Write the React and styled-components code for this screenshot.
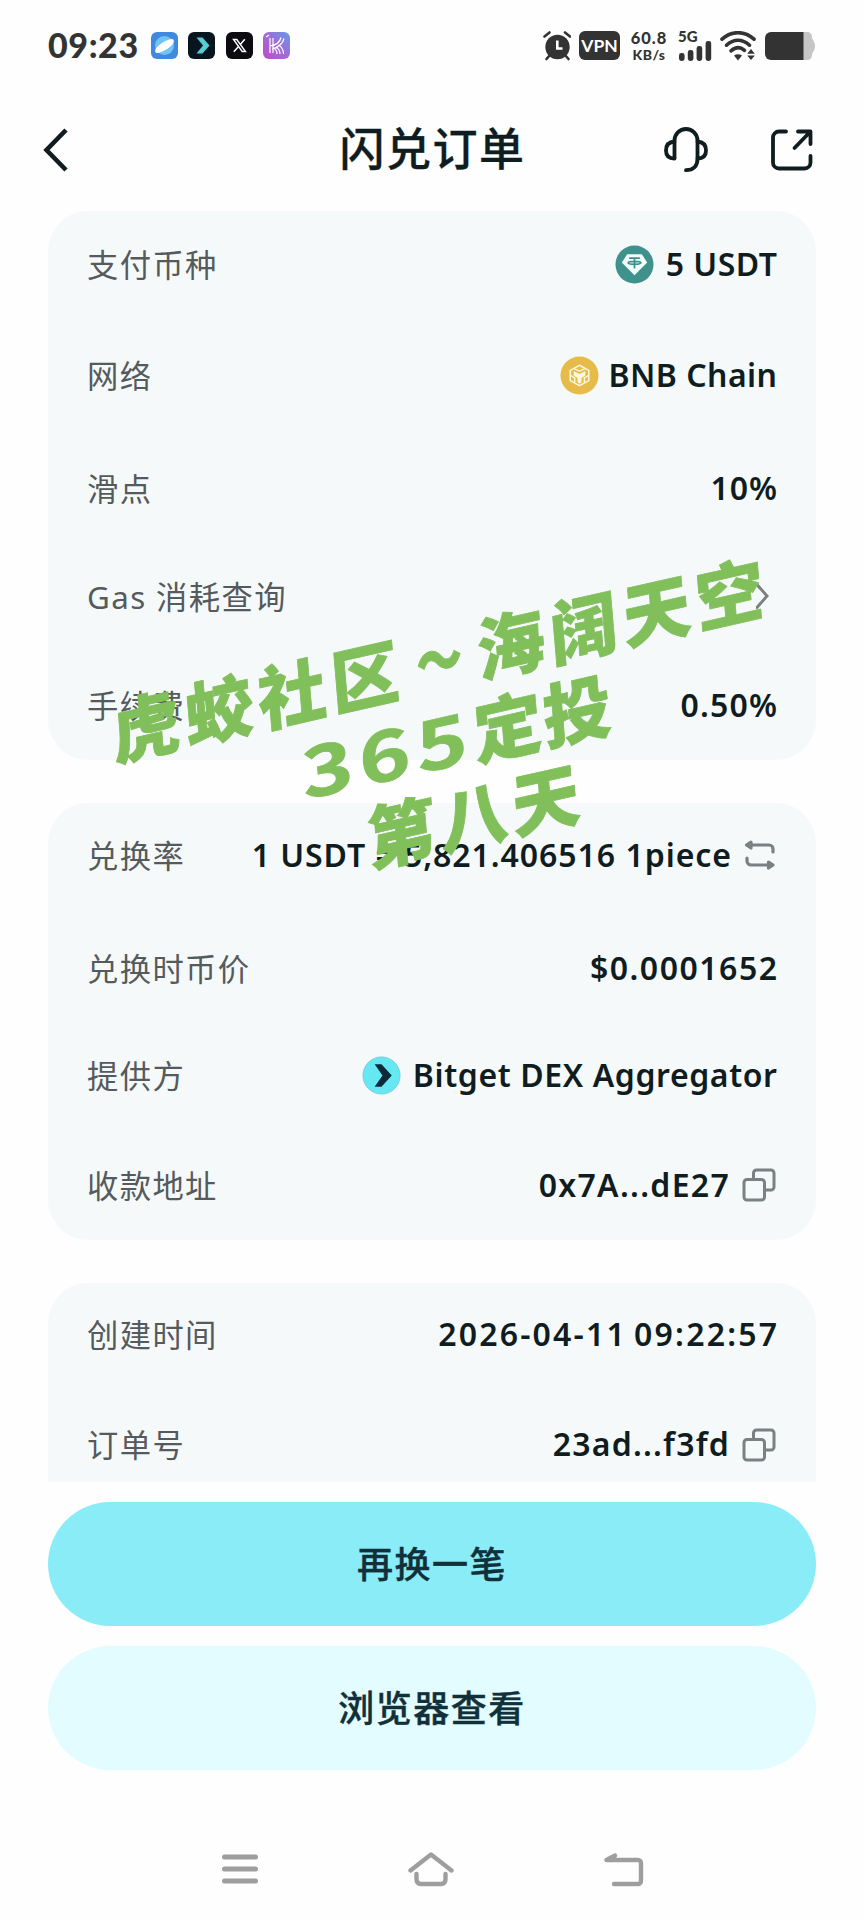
import React from 'react'
import styled, { createGlobalStyle } from 'styled-components';

const GlobalStyle = createGlobalStyle`
    * {
        box-sizing: border-box;
    }
    body {
        margin: 0;
        background-color: #fefefe;
        font-family: "Noto Sans", "Noto Sans CJK SC", sans-serif;
    }
`;

const AlarmIcon = () => (
    <svg width="28" height="30" viewBox="0 0 28 30">
        <circle cx="14.5" cy="16" r="12.2" fill="#333" />
        <path d="M1.5 5.5L6.5 1.5M27 5.5L22 1.5M3.5 28L7 24M25.5 28L22 24" stroke="#333" strokeWidth="2.6" strokeLinecap="round" />
        <path d="M14.3 9.5V17.5H19.5" stroke="#fff" strokeWidth="2.6" fill="none" />
    </svg>
);

const SignalIcon = () => (
    <svg width="34" height="20" viewBox="0 0 34 20" fill="#333">
        <rect x="1" y="12" width="5.6" height="8" rx="2.4" />
        <rect x="9.8" y="9" width="5.6" height="11" rx="2.4" />
        <rect x="18.6" y="5" width="5.6" height="15" rx="2.4" />
        <rect x="27.6" y="0" width="5.6" height="20" rx="2.4" />
    </svg>
);

const WifiIcon = () => (
    <svg width="36" height="30" viewBox="0 0 36 30">
        <g fill="none" stroke="#333" strokeWidth="3.6" strokeLinecap="round">
            <path d="M2 8.2C11.5 -0.5 24.5 -0.5 34 8.2" />
            <path d="M6.5 14.2C13.5 7.5 22.5 7.5 29.5 14.2" />
            <path d="M11 19.8C15.5 15.8 20.5 15.8 24.5 19.4" />
        </g>
        <path d="M14 24.5Q18 22 22 24.5L18 29.5Z" fill="#333" />
        <path d="M31 18L34.8 22.8H27.2ZM31 29L34.8 24.5H27.2Z" fill="#333" />
    </svg>
);

const BatteryIcon = () => (
    <svg width="52" height="30" viewBox="0 0 52 30">
        <path d="M36 1H43C46 1 48 3 48 6C48 9 51 10 51 15C51 20 48 21 48 24C48 27 46 29 43 29H36Z" fill="#c6c6c6" />
        <path d="M7 1H39.5V29H7A6 6 0 0 1 1 23V7A6 6 0 0 1 7 1Z" fill="#333" />
    </svg>
);

const HeadsetIcon = () => (
    <svg width="44" height="46" viewBox="0 0 44 46" fill="none" stroke="#0f1c20" strokeWidth="3.8" strokeLinecap="round">
        <path d="M10.5 31V13.5A11.5 11.5 0 0 1 33.5 13.5V32C33.5 39 29.5 43.2 22 43.2" />
        <path d="M10.5 14.5C4.5 15 2 18.5 2 23.5S4.5 31.5 10.5 31.5" />
        <path d="M33.5 14.5C39.5 15 42 18.5 42 23.5S39.5 31.5 33.5 31.5" />
    </svg>
);

const ShareIcon = () => (
    <svg width="42" height="44" viewBox="0 0 42 44" fill="none" stroke="#0f1c20" strokeWidth="3.8" strokeLinecap="round" strokeLinejoin="round">
        <path d="M15 3.5H8A6 6 0 0 0 2 9.5V34.5A6 6 0 0 0 8 40.5H33.5A6 6 0 0 0 39.5 34.5V28" />
        <path d="M27 3.5H39.5V16M39 4L23.5 20" />
    </svg>
);

const TetherIcon = () => (
    <svg width="39" height="39" viewBox="0 0 40 40">
        <circle cx="20" cy="20" r="19.5" fill="#3f918b" />
        <path d="M12.5 9.5H27.5L33 18L20 31L7 18Z" fill="#f0fffd" />
        <path d="M14.5 13.5H25.5M20 13.5V24M13.5 18.3C13.5 16.3 26.5 16.3 26.5 18.3S13.5 20.3 13.5 18.3Z" fill="none" stroke="#3f918b" strokeWidth="1.8" />
    </svg>
);

const BnbIcon = () => (
    <svg width="39" height="39" viewBox="0 0 40 40">
        <circle cx="20" cy="20" r="19.5" fill="#e6bb49" />
        <g fill="none" stroke="#fff8dd" strokeWidth="1.5">
            <path d="M20 9.5L29.5 14.8V25.3L20 30.5L10.5 25.3V14.8Z" />
            <path d="M14.5 13L20 15.5L25.5 13" />
            <path d="M11 20L15 22.5V27M29 20L25 22.5V27" />
        </g>
        <path d="M14 15.5L20 18.5L26 15.5V20L22 22.5V27L20 28.5L18 27V22.5L14 20Z" fill="#fff8dd" />
    </svg>
);

const BitgetIcon = () => (
    <svg width="39" height="39" viewBox="0 0 40 40">
        <circle cx="20" cy="20" r="19" fill="#65e8f1" stroke="#74cfda" />
        <path d="M13 8.5H20L30.5 20L20 31.5H13L21 20Z" fill="#0c2a3a" />
    </svg>
);

const SwapIcon = () => (
    <svg width="32" height="32" viewBox="0 0 32 32" fill="none" stroke="#7b8182" strokeWidth="3.2" strokeLinecap="round" strokeLinejoin="round">
        <path d="M4 6H25A4 4 0 0 1 29 10V13" />
        <path d="M7 3L2.5 6L7 9Z" fill="#7b8182" />
        <path d="M3 19V22A4 4 0 0 0 7 26H28" />
        <path d="M24.5 23L29 26L24.5 29Z" fill="#7b8182" />
    </svg>
);

const CopyIcon = () => (
    <svg width="34" height="34" viewBox="0 0 34 34" fill="none" stroke="#7b8182" strokeWidth="3" strokeLinejoin="round">
        <path d="M11.5 10V5A3 3 0 0 1 14.5 2H29A3 3 0 0 1 32 5V19A3 3 0 0 1 29 22H24" />
        <rect x="2" y="11.5" width="20.5" height="20.5" rx="3" />
    </svg>
);

const ArrowIcon = () => (
    <svg width="20" height="32" viewBox="0 0 20 32" fill="none" stroke="#7b8182" strokeWidth="3">
        <path d="M0 3.5L11 16L0 28.5" />
    </svg>
);

const Row = ({ label, height, icon, iconGap, value, spacing, words, after }) => (
    <RowBox $height={height}>
        <Label>{label}</Label>
        <Value $gap={iconGap}>
            {icon}
            {value && <ValueText $spacing={spacing} $words={words}>{value}</ValueText>}
            {after && <After>{after}</After>}
        </Value>
    </RowBox>
);

const App = () => {
    return (
        <Screen>
            <GlobalStyle />
            <StatusBar>
                <Clock>09:23</Clock>
                <AppIcons>
                    <svg width="27" height="27" viewBox="0 0 27 27">
                        <rect width="27" height="27" rx="6" fill="#4189df" />
                        <circle cx="13.5" cy="13.5" r="9.5" fill="#72c4f5" />
                        <ellipse cx="13.5" cy="14" rx="11" ry="4" fill="#fff" transform="rotate(-33 13.5 14)" />
                    </svg>
                    <svg width="27" height="27" viewBox="0 0 27 27">
                        <rect width="27" height="27" rx="6" fill="#07151f" />
                        <path d="M8.5 5.5H14.5L21.5 13.5L14.5 21.5H8.5L15 13.5Z" fill="#54cdd3" />
                    </svg>
                    <svg width="27" height="27" viewBox="0 0 27 27">
                        <rect width="27" height="27" rx="6" fill="#0b0b10" />
                        <path d="M7.5 7.5H10.8L19.5 19.5H16.2Z" fill="none" stroke="#fff" strokeWidth="1.4" />
                        <path d="M18.8 7.2L14.5 12.2M12.3 14.7L7.8 19.8" stroke="#fff" strokeWidth="1.5" />
                    </svg>
                    <svg width="27" height="27" viewBox="0 0 27 27">
                        <defs>
                            <linearGradient id="violet" x1="0" y1="1" x2="1" y2="0">
                                <stop offset="0" stopColor="#c04bc8" />
                                <stop offset="0.5" stopColor="#a36ad8" />
                                <stop offset="1" stopColor="#5f9be6" />
                            </linearGradient>
                        </defs>
                        <rect width="27" height="27" rx="6" fill="url(#violet)" />
                        <g fill="none" stroke="#fff" strokeWidth="1.2">
                            <path d="M7 6V21M10 6V21M7 14C14 13 17 10 18 5.5M9 17C16 15 20 11 21 6.5M13 15C16 17 17 19 17 22M15.5 13C19 15 20.5 18 20.5 22M10 16C13 17 14 19 14 22M3 5L6 3" />
                        </g>
                    </svg>
                </AppIcons>
                <StatusRight>
                    <AlarmIcon />
                    <Vpn>VPN</Vpn>
                    <Speed>
                        <span>60.8</span>
                        <small>KB/s</small>
                    </Speed>
                    <Signal>
                        <span>5G</span>
                        <SignalIcon />
                    </Signal>
                    <WifiIcon />
                    <BatteryIcon />
                </StatusRight>
            </StatusBar>

            <Header>
                <svg width="28" height="46" viewBox="0 0 28 46" fill="none" stroke="#0f1c20" strokeWidth="4.6">
                    <path d="M24 3L4.5 23L24 43" />
                </svg>
                <Title>闪兑订单</Title>
                <HeaderIcons>
                    <HeadsetIcon />
                    <ShareIcon />
                </HeaderIcons>
            </Header>

            <Content>
                <Card $height={549}>
                    <Row label="支付币种" height={106} icon={<TetherIcon />} value="5 USDT" spacing={0.5} />
                    <Row label="网络" height={116} icon={<BnbIcon />} iconGap={9} value="BNB Chain" spacing={0.45} />
                    <Row label="滑点" height={110} value="10%" spacing={1} />
                    <Row label="Gas 消耗查询" height={106} after={<ArrowIcon />} />
                    <Row label="手续费" height={112} value="0.50%" spacing={1.2} />
                </Card>
                <Card $height={437}>
                    <Row label="兑换率" height={104} value="1 USDT = 5,821.406516 1piece" spacing={0.95} after={<SwapIcon />} />
                    <Row label="兑换时币价" height={122} value="$0.0001652" spacing={1.5} />
                    <Row label="提供方" height={92} icon={<BitgetIcon />} value="Bitget DEX Aggregator" spacing={0.6} />
                    <Row label="收款地址" height={128} value="0x7A...dE27" spacing={1.3} after={<CopyIcon />} />
                </Card>
                <Card $height={199} $cut>
                    <Row label="创建时间" height={103} value="2026-04-11 09:22:57" spacing={2.2} words={-3.5} />
                    <Row label="订单号" height={117} value="23ad...f3fd" spacing={1.2} after={<CopyIcon />} />
                </Card>
            </Content>

            <Actions>
                <PrimaryButton>再换一笔</PrimaryButton>
                <PlainButton>浏览器查看</PlainButton>
            </Actions>

            <NavBar>
                <svg width="36" height="30" viewBox="0 0 36 30" stroke="#9e9e9e" strokeWidth="5" strokeLinecap="round">
                    <path d="M2.5 3H33.5M2.5 15H33.5M2.5 27H33.5" />
                </svg>
                <svg width="46" height="36" viewBox="0 0 46 36" fill="none" stroke="#9e9e9e" strokeWidth="4.4" strokeLinecap="round" strokeLinejoin="round">
                    <path d="M2.5 19.5L23 3.5L43.5 19.5" />
                    <path d="M8.5 23V28C8.5 31 10 33 13 33H33C36 33 37.5 31 37.5 28V23" />
                </svg>
                <svg width="40" height="36" viewBox="0 0 40 36" fill="none" stroke="#9e9e9e" strokeWidth="4.4" strokeLinecap="round" strokeLinejoin="round">
                    <path d="M11 4.5L2.5 9H34A3 3 0 0 1 37 12V30A3 3 0 0 1 34 33H10" />
                </svg>
            </NavBar>

            <Watermark>
                <MarkLine $spacing={5.8}>虎蛟社区<Tilde>～</Tilde>海阔天空</MarkLine>
                <MarkLine $spacing={2}><Digits>365</Digits>定投</MarkLine>
                <MarkLine $spacing={5}>第八天</MarkLine>
            </Watermark>
        </Screen>
    )
}

export default App;

const Screen = styled.div`
    position: relative;
    width: 864px;
    height: 1920px;
    overflow: hidden;
    display: flex;
    flex-direction: column;
    background-color: #fefefe;
    color: #0f1c20;
`;

const StatusBar = styled.div`
    display: flex;
    align-items: center;
    height: 91px;
    padding: 0 48px;
    font-family: Lato, "Noto Sans", sans-serif;
    color: #333;
`;

const Clock = styled.div`
    width: 103px;
    padding-bottom: 2px;
    font-size: 34px;
    font-weight: 900;
    line-height: 40px;
    letter-spacing: 0.6px;
`;

const AppIcons = styled.div`
    display: flex;
    gap: 10.3px;
`;

const StatusRight = styled.div`
    display: flex;
    align-items: center;
    gap: 8px;
    margin-left: auto;
`;

const Vpn = styled.div`
    width: 41px;
    height: 29px;
    border-radius: 6px;
    background-color: #333;
    color: #fff;
    font-size: 17.5px;
    font-weight: 700;
    line-height: 29px;
    text-align: center;
`;

const Speed = styled.div`
    display: flex;
    flex-direction: column;
    align-items: center;
    width: 42px;
    font-size: 16.5px;
    font-weight: 900;
    line-height: 17px;
    letter-spacing: 1px;

    small {
        font-size: 14px;
        line-height: 15px;
        letter-spacing: 0.4px;
    }
`;

const Signal = styled.div`
    display: flex;
    flex-direction: column;
    width: 34px;
    height: 30px;
    font-size: 15px;
    font-weight: 900;
    line-height: 10px;
`;

const Header = styled.div`
    display: flex;
    align-items: center;
    justify-content: space-between;
    height: 120px;
    padding: 0 51px 3px 42px;
`;

const Title = styled.div`
    margin-left: 131px;
    padding-bottom: 1px;
    font-size: 45px;
    font-weight: 500;
    letter-spacing: 1.5px;
    line-height: 60px;
    -webkit-text-stroke: 0.3px #0f1c20;
`;

const HeaderIcons = styled.div`
    display: flex;
    align-items: center;
    gap: 63px;
`;

const Content = styled.div`
    display: flex;
    flex-direction: column;
    gap: 43px;
    padding: 0 48px;
`;

const Card = styled.div`
    height: ${props => props.$height}px;
    padding: 0 39px;
    overflow: hidden;
    border-radius: ${props => props.$cut ? '40px 40px 0 0' : '40px'};
    background-color: #f5f9fa;
`;

const RowBox = styled.div`
    display: flex;
    align-items: center;
    justify-content: space-between;
    height: ${props => props.$height}px;
    white-space: nowrap;
`;

const Label = styled.div`
    padding-bottom: 2px;
    color: #555a5c;
    font-size: 31.3px;
    letter-spacing: 1.4px;
`;

const Value = styled.div`
    display: flex;
    align-items: center;
    gap: ${props => props.$gap || 12}px;
    font-size: 32px;
    font-weight: 600;
`;

const ValueText = styled.span`
    padding-bottom: 2px;
    letter-spacing: ${props => props.$spacing}px;
    word-spacing: ${props => props.$words || 0}px;

    &:last-child {
        margin-right: -${props => props.$spacing}px;
    }
`;

const After = styled.span`
    display: flex;
    margin-right: 1px;
`;

const Actions = styled.div`
    display: flex;
    flex-direction: column;
    gap: 20px;
    padding: 20px 48px 0;
`;

const PrimaryButton = styled.button`
    height: 124px;
    padding-bottom: 5px;
    border: none;
    border-radius: 62px;
    background-color: #8aecf7;
    color: #10303a;
    font-family: "Noto Sans CJK SC", sans-serif;
    font-size: 36px;
    font-weight: 500;
    letter-spacing: 1.5px;
    -webkit-text-stroke: 0.4px #10303a;
    cursor: pointer;
`;

const PlainButton = styled(PrimaryButton)`
    background-color: #e3fcff;
`;

const NavBar = styled.div`
    display: flex;
    align-items: center;
    justify-content: space-between;
    height: 100px;
    margin-top: 49px;
    padding: 0 220px 0 222px;
`;

const Watermark = styled.div`
    position: absolute;
    top: 614px;
    left: 58px;
    width: 800px;
    transform: rotate(-12.8deg);
    color: #81bf5b;
    font-family: "Noto Sans CJK SC", sans-serif;
    font-weight: 900;
    text-align: center;
    -webkit-text-stroke: 0.8px #81bf5b;
    pointer-events: none;
`;

const MarkLine = styled.div`
    height: 80px;
    font-size: 69px;
    line-height: 80px;
    letter-spacing: ${props => props.$spacing}px;
    white-space: nowrap;
    transform: skewX(-8deg);
`;

const Tilde = styled.span`
    display: inline-block;
    transform: scale(0.68, 0.9);
`;

const Digits = styled.span`
    display: inline-block;
    margin: 0 20px 0 17px;
    font-weight: 700;
    letter-spacing: 5px;
    transform: scaleX(1.28);
`;
